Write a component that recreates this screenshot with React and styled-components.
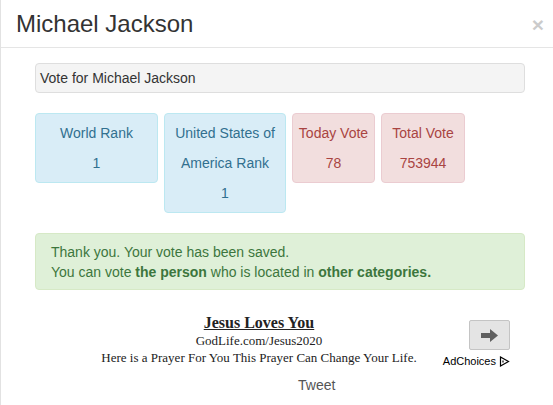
import React from 'react';
import styled, { createGlobalStyle } from 'styled-components';

const GlobalStyle = createGlobalStyle`
  html, body {
    margin: 0;
    padding: 0;
    background: #fff;
  }
  body {
    font-family: 'Liberation Sans', Arial, sans-serif;
    font-size: 14px;
    color: #333;
  }
`;

const Modal = styled.div`
  width: 553px;
  height: 405px;
  box-sizing: border-box;
  border-left: 1px solid #e2e2e2;
  background: #fff;
  overflow: hidden;
`;

const Header = styled.div`
  display: flex;
  justify-content: space-between;
  align-items: flex-start;
  height: 48px;
  box-sizing: border-box;
  padding: 10px 9px 0 15px;
  border-bottom: 1px solid #e5e5e5;
`;

const Title = styled.h2`
  margin: 0;
  font-size: 24px;
  line-height: 27px;
  font-weight: normal;
  color: #333;
`;

const Close = styled.button`
  margin-top: 4px;
  padding: 0;
  border: 0;
  background: none;
  font-family: 'Liberation Sans', Arial, sans-serif;
  font-size: 21px;
  line-height: 21px;
  font-weight: bold;
  color: #000;
  opacity: 0.2;
  cursor: pointer;
`;

const Body = styled.div`
  padding: 15px 28px 0 34px;
`;

const VoteField = styled.div`
  height: 30px;
  box-sizing: border-box;
  padding: 4px 4px;
  line-height: 20px;
  background: #f4f4f4;
  border: 1px solid #dedede;
  border-radius: 4px;
  color: #333;
`;

const StatRow = styled.div`
  display: flex;
  align-items: flex-start;
  gap: 6px;
  margin-top: 20px;
`;

const palettes = {
  info: { bg: '#d9edf7', border: '#bce8f1', color: '#31708f' },
  danger: { bg: '#f2dede', border: '#ebccd1', color: '#a94442' },
};

const StatBox = styled.div`
  width: ${(p) => p.$w}px;
  box-sizing: border-box;
  padding: 4px 2px;
  text-align: center;
  line-height: 30px;
  border-radius: 4px;
  background: ${(p) => palettes[p.$kind].bg};
  border: 1px solid ${(p) => palettes[p.$kind].border};
  color: ${(p) => palettes[p.$kind].color};
`;

const Alert = styled.div`
  margin-top: 20px;
  padding: 8px 15px 7px;
  line-height: 20px;
  background: #dff0d8;
  border: 1px solid #d6e9c6;
  border-radius: 4px;
  color: #3c763d;

  strong {
    font-weight: bold;
  }
`;

const AdRow = styled.div`
  display: flex;
  align-items: flex-start;
  gap: 16px;
  margin-top: 24px;
  padding-left: 58px;
`;

const AdText = styled.div`
  width: 332px;
  text-align: center;
  font-family: 'Liberation Serif', 'Times New Roman', serif;
  color: #222;
`;

const AdTitle = styled.a`
  display: block;
  font-size: 16px;
  line-height: 18px;
  font-weight: bold;
  color: #222;
  text-decoration: underline;
`;

const AdLine = styled.div`
  font-size: 13px;
  line-height: 17px;
`;

const AdSide = styled.div`
  width: 69px;
  display: flex;
  flex-direction: column;
  align-items: flex-end;
  padding-top: 6px;
`;

const ArrowButton = styled.button`
  width: 41px;
  height: 30px;
  padding: 0;
  display: flex;
  align-items: center;
  justify-content: center;
  background: #e4e4e4;
  border: 1px solid #c4c4c4;
  border-radius: 2px;
`;

const AdChoices = styled.div`
  display: flex;
  align-items: center;
  gap: 3px;
  margin-top: 5px;
  font-size: 11px;
  line-height: 13px;
  color: #000;
`;

const Tweet = styled.div`
  margin-top: 7px;
  padding-left: 263px;
  line-height: 20px;
  color: #555;
`;

const stats = [
  { kind: 'info', w: 123, label: 'World Rank', value: '1' },
  { kind: 'info', w: 122, label: 'United States of America Rank', value: '1' },
  { kind: 'danger', w: 83, label: 'Today Vote', value: '78' },
  { kind: 'danger', w: 84, label: 'Total Vote', value: '753944' },
];

const App = () => {
  return (
    <>
      <GlobalStyle />
      <Modal>
        <Header>
          <Title>Michael Jackson</Title>
          <Close aria-label="Close">×</Close>
        </Header>

        <Body>
          <VoteField>Vote for Michael Jackson</VoteField>

          <StatRow>
            {stats.map((s) => (
              <StatBox key={s.label} $kind={s.kind} $w={s.w}>
                <div>{s.label}</div>
                <div>{s.value}</div>
              </StatBox>
            ))}
          </StatRow>

          <Alert>
            Thank you. Your vote has been saved.
            <br />
            You can vote <strong>the person</strong> who is located in <strong>other categories.</strong>
          </Alert>

          <AdRow>
            <AdText>
              <AdTitle>Jesus Loves You</AdTitle>
              <AdLine>GodLife.com/Jesus2020</AdLine>
              <AdLine>Here is a Prayer For You This Prayer Can Change Your Life.</AdLine>
            </AdText>
            <AdSide>
              <ArrowButton aria-label="Open">
                <svg width="17" height="13" viewBox="0 0 17 13">
                  <path d="M0 4h9V0l8 6.5-8 6.5V9H0z" fill="#5f5f5f" />
                </svg>
              </ArrowButton>
              <AdChoices>
                AdChoices
                <svg width="11" height="11" viewBox="0 0 11 11">
                  <path d="M1.5 1v9l8-4.5z" fill="none" stroke="#000" strokeWidth="1.2" />
                  <path d="M4 4.5v2" stroke="#000" strokeWidth="1.2" />
                </svg>
              </AdChoices>
            </AdSide>
          </AdRow>

          <Tweet>Tweet</Tweet>
        </Body>
      </Modal>
    </>
  );
};

export default App;
